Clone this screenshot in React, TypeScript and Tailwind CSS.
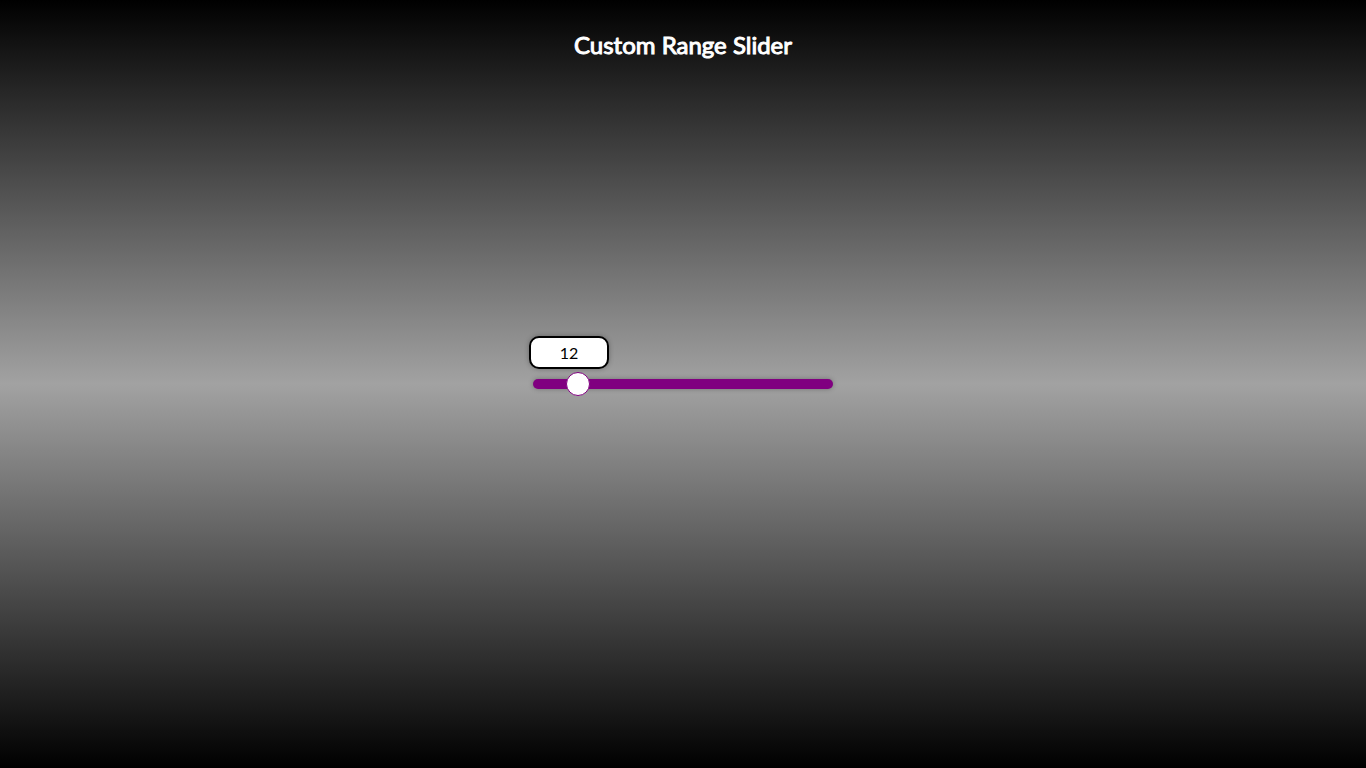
import { useState } from "react";

const MIN = 0;
const MAX = 100;

export default function App() {
  const [value, setValue] = useState(12);
  const ratio = (value - MIN) / (MAX - MIN);

  return (
    <main className="grid min-h-screen grid-rows-[1fr_auto_1fr] justify-items-center bg-linear-to-b/srgb from-black via-[#a2a2a2] to-black font-['Lato',sans-serif]">
      <h1 className="pt-7 text-2xl leading-[34px] font-normal text-white [-webkit-text-stroke:1px_white]">
        <label htmlFor="range">Custom Range Slider</label>
      </h1>
      <div className="relative flex h-6 w-[300px] items-center">
        <input
          id="range"
          type="range"
          min={MIN}
          max={MAX}
          value={value}
          onChange={(e) => setValue(Number(e.target.value))}
          className="h-[10px] w-full cursor-pointer appearance-none rounded-[5px] bg-[purple] shadow-[0_0_5px_rgba(0,0,0,0.3)] outline-none [&::-webkit-slider-thumb]:size-6 [&::-webkit-slider-thumb]:appearance-none [&::-webkit-slider-thumb]:rounded-full [&::-webkit-slider-thumb]:border [&::-webkit-slider-thumb]:border-[purple] [&::-webkit-slider-thumb]:bg-white"
        />
        <output
          htmlFor="range"
          className="absolute bottom-[27px] w-20 -translate-x-1/2 rounded-[10px] border-2 border-black bg-white py-1 text-center text-base leading-[21px] text-black shadow-[0_0_5px_rgba(0,0,0,0.3)]"
          style={{ left: `${ratio * 300}px` }}
        >
          {value}
        </output>
      </div>
    </main>
  );
}
